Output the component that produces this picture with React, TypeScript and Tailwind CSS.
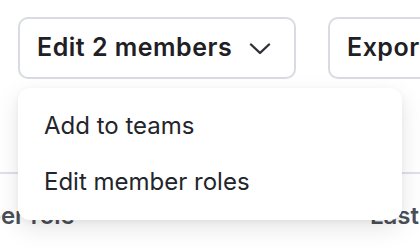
import React from "react";

export default function App() {
  return (
    <div className="relative h-[248px] w-[420px] overflow-hidden bg-white" style={{ fontFamily: "Inter, 'Noto Sans', sans-serif" }}>
      <div className="flex gap-[32px] pl-[18px] pt-[17px]">
        <button className="flex h-[62px] w-[278px] shrink-0 items-center gap-[17px] rounded-[10px] border-2 border-[#d8dbe2] bg-white pl-[17px] text-[25px] font-semibold tracking-[0.5px] text-[#1f2024]">
          <span className="whitespace-nowrap">Edit 2 members</span>
          <svg width="22" height="12" viewBox="0 0 22 12" fill="none" className="mt-[1px]">
            <path d="M2 1.5 L11 10 L20 1.5" stroke="#2d3038" strokeWidth="2.4" strokeLinecap="round" strokeLinejoin="round" />
          </svg>
        </button>
        <button className="flex h-[62px] w-[160px] shrink-0 items-center rounded-[10px] border-2 border-[#d8dbe2] bg-white pl-[17px] text-[25px] font-semibold tracking-[0.5px] text-[#1f2024]">
          Export
        </button>
      </div>
      <div className="mt-[93px] border-t-2 border-[#dfe1e6]">
        <div className="flex whitespace-nowrap pt-[24px] text-[24px] font-semibold text-[#4b4f58]">
          <span className="ml-[-72px] w-[442px] shrink-0">Member role</span>
          <span>Last active</span>
        </div>
      </div>
      <div className="absolute left-[18px] top-[88px] flex h-[132px] w-[384px] flex-col justify-center gap-[28px] rounded-[12px] bg-white pl-[26px] text-[24px] text-[#22252b] shadow-[0_8px_24px_rgba(0,0,0,0.10),0_2px_6px_rgba(0,0,0,0.05)]">
        <div className="leading-[28px]">Add to teams</div>
        <div className="leading-[28px]">Edit member roles</div>
      </div>
    </div>
  );
}
